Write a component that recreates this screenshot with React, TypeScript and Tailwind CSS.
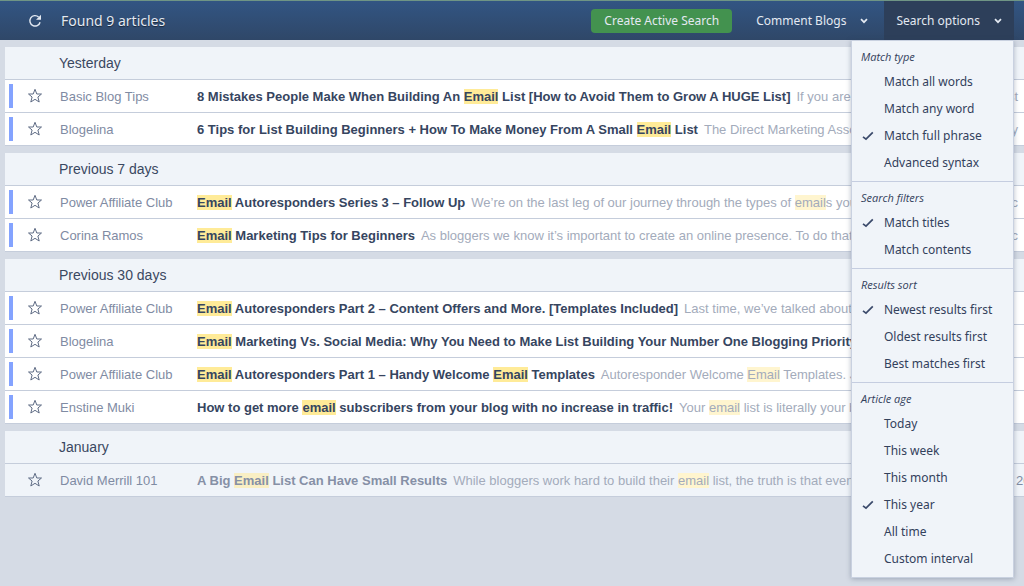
import { ReactNode } from 'react';

interface Article {
  source: string;
  title: string;
  excerpt: string;
  tail?: string;
  read?: boolean;
}

interface ArticleGroup {
  label: string;
  articles: Article[];
}

interface MenuSection {
  label: string;
  name: string;
  type: 'radio' | 'checkbox';
  options: string[];
  checked: string;
}

const groups: ArticleGroup[] = [
  {
    label: 'Yesterday',
    articles: [
      {
        source: 'Basic Blog Tips',
        title: '8 Mistakes People Make When Building An Email List [How to Avoid Them to Grow A HUGE List]',
        excerpt: 'If you are',
        tail: 'st',
      },
      {
        source: 'Blogelina',
        title: '6 Tips for List Building Beginners + How To Make Money From A Small Email List',
        excerpt: 'The Direct Marketing Association',
        tail: 'y',
      },
    ],
  },
  {
    label: 'Previous 7 days',
    articles: [
      {
        source: 'Power Affiliate Club',
        title: 'Email Autoresponders Series 3 – Follow Up',
        excerpt: 'We’re on the last leg of our journey through the types of emails you',
        tail: 'c',
      },
      {
        source: 'Corina Ramos',
        title: 'Email Marketing Tips for Beginners',
        excerpt: 'As bloggers we know it’s important to create an online presence. To do that,',
        tail: 'c',
      },
    ],
  },
  {
    label: 'Previous 30 days',
    articles: [
      {
        source: 'Power Affiliate Club',
        title: 'Email Autoresponders Part 2 – Content Offers and More. [Templates Included]',
        excerpt: 'Last time, we’ve talked about a',
      },
      {
        source: 'Blogelina',
        title: 'Email Marketing Vs. Social Media: Why You Need to Make List Building Your Number One Blogging Priority',
        excerpt: '',
      },
      {
        source: 'Power Affiliate Club',
        title: 'Email Autoresponders Part 1 – Handy Welcome Email Templates',
        excerpt: 'Autoresponder Welcome Email Templates. J',
      },
      {
        source: 'Enstine Muki',
        title: 'How to get more email subscribers from your blog with no increase in traffic!',
        excerpt: 'Your email list is literally your b',
      },
    ],
  },
  {
    label: 'January',
    articles: [
      {
        source: 'David Merrill 101',
        title: 'A Big Email List Can Have Small Results',
        excerpt: 'While bloggers work hard to build their email list, the truth is that even',
        tail: '20',
        read: true,
      },
    ],
  },
];

const menuSections: MenuSection[] = [
  {
    label: 'Match type',
    name: 'match-type',
    type: 'radio',
    options: ['Match all words', 'Match any word', 'Match full phrase', 'Advanced syntax'],
    checked: 'Match full phrase',
  },
  {
    label: 'Search filters',
    name: 'search-filters',
    type: 'checkbox',
    options: ['Match titles', 'Match contents'],
    checked: 'Match titles',
  },
  {
    label: 'Results sort',
    name: 'results-sort',
    type: 'radio',
    options: ['Newest results first', 'Oldest results first', 'Best matches first'],
    checked: 'Newest results first',
  },
  {
    label: 'Article age',
    name: 'article-age',
    type: 'radio',
    options: ['Today', 'This week', 'This month', 'This year', 'All time', 'Custom interval'],
    checked: 'This year',
  },
];

// Wraps every occurrence of the search phrase in a <mark>
function highlight(text: string, className: string): ReactNode[] {
  return text.split(/(email)/i).map((part, i) =>
    part.toLowerCase() === 'email' ? (
      <mark key={i} className={className}>
        {part}
      </mark>
    ) : (
      part
    ),
  );
}

function ReloadIcon() {
  return (
    <svg viewBox="0 0 14 14" className="h-3.5 w-3.5" fill="none" aria-hidden="true">
      <path d="M10.6 3A5.2 5.2 0 1 0 12.1 8.2" stroke="currentColor" strokeWidth="1.4" />
      <path d="M13 0.8V5.8H8Z" fill="currentColor" />
    </svg>
  );
}

function ChevronIcon() {
  return (
    <svg viewBox="0 0 8 6" className="h-1.5 w-2" fill="none" aria-hidden="true">
      <path d="M1 1.2L4 4.2L7 1.2" stroke="currentColor" strokeWidth="1.7" />
    </svg>
  );
}

function StarIcon() {
  return (
    <svg viewBox="0 0 16 16" className="h-4 w-4" fill="none" aria-hidden="true">
      <path
        d="M8 1.3L9.8 6H14.5L10.9 9L12.2 14L8 11.3L3.8 14L5.1 9L1.5 6H6.2Z"
        stroke="#5f6c85"
        strokeWidth="1"
        strokeLinejoin="round"
      />
    </svg>
  );
}

function CheckIcon() {
  return (
    <svg
      viewBox="0 0 12 10"
      className="invisible h-2.5 w-3 shrink-0 peer-checked:visible"
      fill="none"
      aria-hidden="true"
    >
      <path d="M1 5.8L4 8.2L10.8 1.4" stroke="#3b4a6b" strokeWidth="1.7" />
    </svg>
  );
}

function ArticleRow({ article }: { article: Article }) {
  const { source, title, excerpt, tail, read } = article;

  return (
    <li
      className={`flex h-[33px] items-center border-b border-[#c5cddb] text-[13px] whitespace-nowrap ${
        read ? 'bg-[#f0f4f9]' : 'bg-white'
      }`}
    >
      <span className={`ml-1 h-6 w-1 shrink-0 ${read ? '' : 'bg-[#84a3ff]'}`} />
      <button type="button" aria-label={`Star ${title}`} className="ml-3.5 shrink-0">
        <StarIcon />
      </button>
      <span className="ml-[17px] w-[137px] shrink-0 pt-0.5 text-[#7f8ba3]">{source}</span>
      <a href="#article" className="min-w-0 flex-1 overflow-hidden pt-0.5">
        <span className={`font-bold ${read ? 'text-[#8690a6]' : 'text-[#36455f]'}`}>
          {highlight(title, read ? 'bg-[#f9efc4] text-inherit' : 'bg-[#ffeb98] text-inherit')}
        </span>
        <span className="ml-1.5 text-[#a3abbb]">{highlight(excerpt, 'bg-[#fff5cf] text-inherit')}</span>
      </a>
      <span
        className={`shrink-0 overflow-hidden pt-0.5 ${
          read ? 'w-2 text-[#7f8ba3]' : 'w-8 pr-1.5 text-right text-[#a3abbb]'
        }`}
      >
        {tail}
      </span>
    </li>
  );
}

function OptionsMenu() {
  return (
    <div className="absolute top-full right-0 z-10 w-[163px] border border-[#c9d1e0] bg-[#f0f4f9] text-[#33415c] shadow-[0_1px_5px_rgba(50,65,95,0.35)] [text-shadow:none]">
      {menuSections.map((section) => (
        <fieldset key={section.name} className="border-b border-[#c5cde0] pt-[7px] pb-[5px] last:border-b-0">
          <legend className="float-left h-5 w-full px-[9px] font-['Open_Sans',sans-serif] text-[11px] leading-[18px] italic">
            {section.label}
          </legend>
          {section.options.map((option) => (
            <label key={option} className="relative clear-both flex h-[27px] items-center gap-2.5 pl-2.5">
              <input
                type={section.type}
                name={section.name}
                defaultChecked={option === section.checked}
                className="peer sr-only"
              />
              <CheckIcon />
              <span>{option}</span>
            </label>
          ))}
        </fieldset>
      ))}
    </div>
  );
}

export default function App() {
  return (
    <div className="min-h-screen overflow-hidden bg-[#d5dbe5] font-['Liberation_Sans',Arial,sans-serif]">
      <header className="flex h-10 items-center border-t border-[#6f9585] bg-linear-to-b from-[#325583] to-[#2f4768] pr-2.5 font-['Noto_Sans',sans-serif] text-[12px] text-[#e3e9f2] [text-shadow:0_1px_1px_rgba(0,0,0,0.5)]">
        <button type="button" aria-label="Reload" className="ml-7">
          <ReloadIcon />
        </button>
        <h1 className="ml-[19px] text-[14px]">Found 9 articles</h1>
        <button type="button" className="ml-auto h-6 rounded-sm bg-[#43924f] px-[13px]">
          Create Active Search
        </button>
        <button type="button" className="ml-3 flex h-full items-center gap-3.5 px-3">
          Comment Blogs
          <ChevronIcon />
        </button>
        <div className="relative ml-1 h-full">
          <button type="button" aria-expanded="true" className="flex h-full items-center gap-3.5 bg-[#2d3f5a] px-3">
            Search options
            <ChevronIcon />
          </button>
          <OptionsMenu />
        </div>
      </header>

      <main className="flex flex-col gap-[7px] pt-[7px] pl-[5px]">
        {groups.map((group) => (
          <section key={group.label}>
            <h2 className="h-[33px] border-b border-[#c5cddb] bg-[#f0f4f9] pl-[54px] text-[14px] leading-8 text-[#3a4861]">
              {group.label}
            </h2>
            <ul>
              {group.articles.map((article) => (
                <ArticleRow key={article.title} article={article} />
              ))}
            </ul>
          </section>
        ))}
      </main>
    </div>
  );
}
